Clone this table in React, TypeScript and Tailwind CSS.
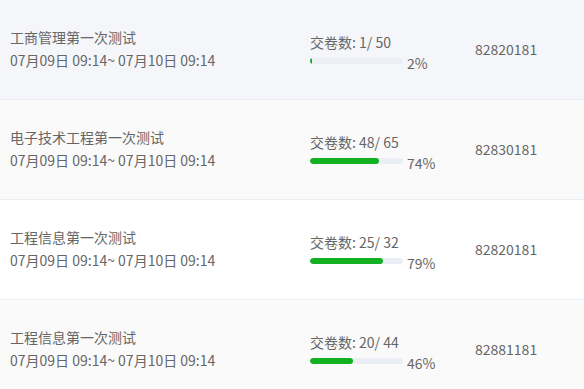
import React from "react";

const rows = [
  { title: "工商管理第一次测试", done: 1, total: 50, pct: 2, code: "82820181", bg: "bg-[#f5f6fa]" },
  { title: "电子技术工程第一次测试", done: 48, total: 65, pct: 74, code: "82830181", bg: "bg-[#fafafa]" },
  { title: "工程信息第一次测试", done: 25, total: 32, pct: 79, code: "82820181", bg: "bg-white" },
  { title: "工程信息第一次测试", done: 20, total: 44, pct: 46, code: "82881181", bg: "bg-[#fafafa]" },
];

export default function App() {
  return (
    <div
      className="w-[584px] h-[389px] overflow-hidden bg-white text-[14px] text-[#666]"
      style={{ fontFamily: '"Noto Sans CJK SC", sans-serif' }}
    >
      {rows.map((r, i) => (
        <div key={i} className={`flex items-center h-[100px] border-b border-[#ebeef5] ${r.bg}`}>
          <div className="w-[310px] pl-[10px] pb-[1px]">
            <div className="leading-[23px]">{r.title}</div>
            <div className="leading-[23px]">07月09日 09:14~ 07月10日 09:14</div>
          </div>
          <div className="w-[165px] pt-[5px]">
            <div className="leading-[20px]">交卷数: {r.done}/ {r.total}</div>
            <div className="flex items-start">
              <div className="mt-[6px] w-[93px] h-[6px] rounded-full bg-[#ebeef5] overflow-hidden">
                <div className="h-full rounded-full bg-[#13b021]" style={{ width: `${r.pct}%` }} />
              </div>
              <span className="ml-[4px] leading-[20px] mt-[1px]">{r.pct}%</span>
            </div>
          </div>
          <div className="leading-[20px] pb-[2px]">{r.code}</div>
        </div>
      ))}
    </div>
  );
}
